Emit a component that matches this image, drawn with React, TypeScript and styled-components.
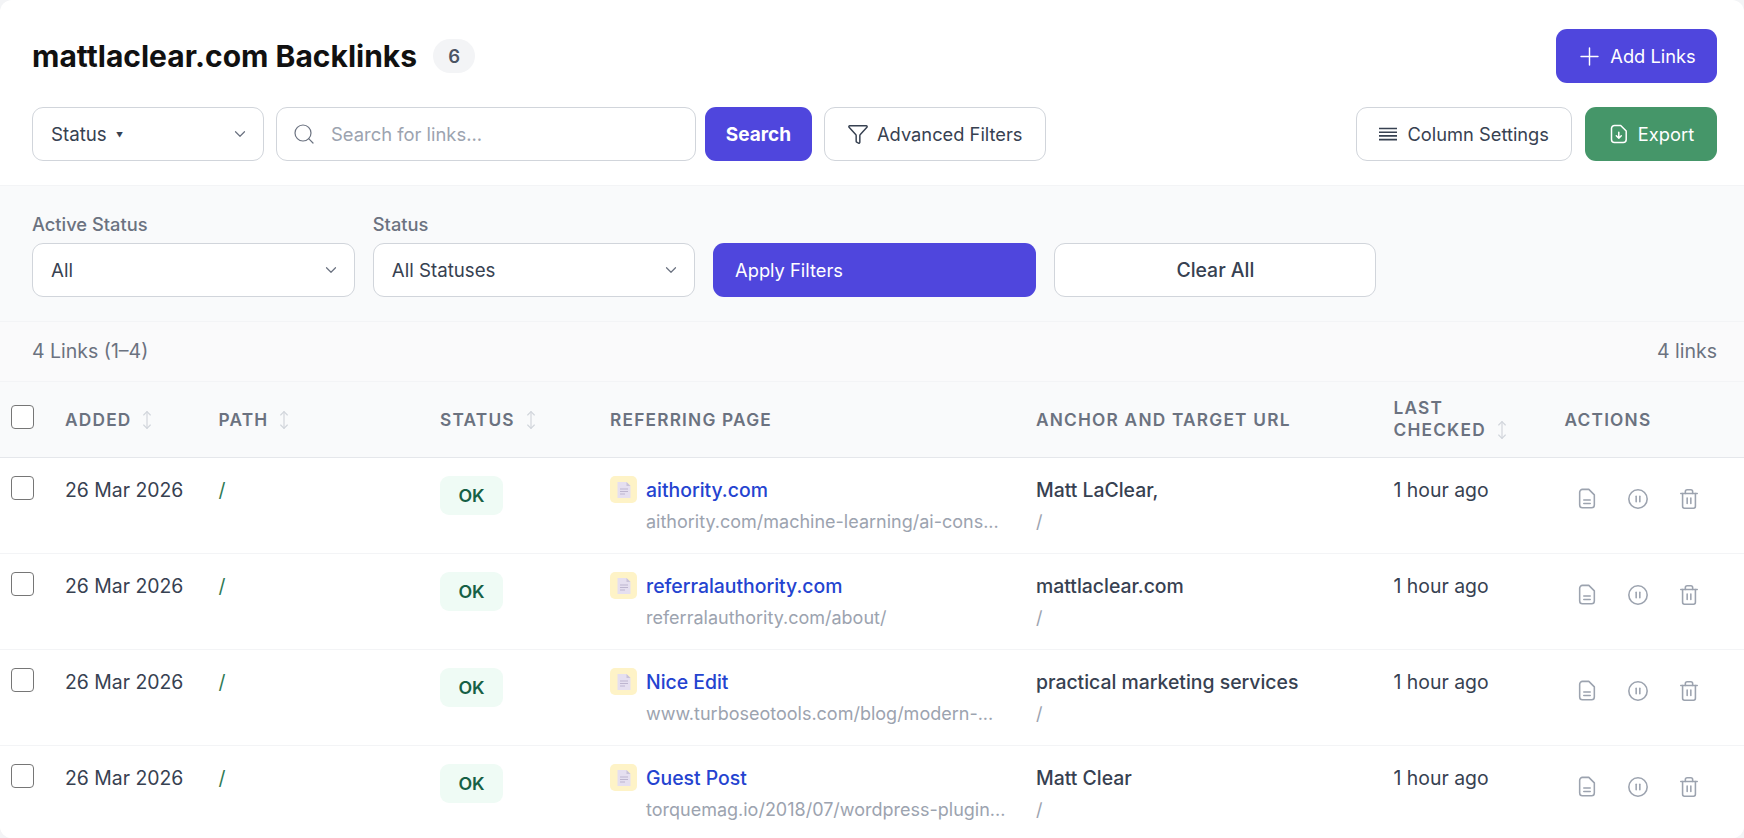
import styled, { createGlobalStyle } from 'styled-components';
import { ChevronDown, CirclePause, Filter, MoveVertical, Plus, Search, Trash2 } from 'lucide-react';

const GlobalStyle = createGlobalStyle`
  html, body {
    margin: 0;
    height: 100%;
    overflow: hidden;
    background: #f3f4f6;
  }
  body {
    font-family: Inter, "Liberation Sans", sans-serif;
    color: #374151;
  }
`;

const COLUMNS = '65px 153.5px 221.5px 170px 426px 357.5px 171px 180px';

const rows = [
  { page: 'aithority.com', url: 'aithority.com/machine-learning/ai-cons...', anchor: 'Matt LaClear,' },
  { page: 'referralauthority.com', url: 'referralauthority.com/about/', anchor: 'mattlaclear.com' },
  { page: 'Nice Edit', url: 'www.turboseotools.com/blog/modern-...', anchor: 'practical marketing services' },
  { page: 'Guest Post', url: 'torquemag.io/2018/07/wordpress-plugin...', anchor: 'Matt Clear' },
];

function ColumnsIcon() {
  return (
    <svg width="18" height="18" viewBox="0 0 18 18" fill="none" stroke="#374151" strokeWidth="1.6">
      <path d="M0 3.5h18M0 7.2h18M0 10.9h18M0 14.6h18" />
    </svg>
  );
}

function ExportIcon() {
  return (
    <svg width="18" height="20" viewBox="0 0 18 20" fill="none" stroke="#fff" strokeWidth="1.5" strokeLinecap="round" strokeLinejoin="round">
      <path d="M4.5 1.5h6.2L16.2 7v8.5a3 3 0 0 1-3 3H4.5a3 3 0 0 1-3-3v-11a3 3 0 0 1 3-3Z" />
      <path d="M8.8 8.2v6M6.3 11.8l2.5 2.5 2.5-2.5" />
    </svg>
  );
}

function PageIcon() {
  return (
    <svg width="14" height="16" viewBox="0 0 14 16">
      <path d="M0.5 0h9L13.5 4v12H0.5Z" fill="#e5dff0" />
      <path d="M9.5 0 13.5 4H9.5Z" fill="#c9c2d8" />
      <path d="M3 7h8M3 9.5h8M3 12h5" stroke="#bdb5cf" strokeWidth="1.2" />
    </svg>
  );
}

function DocActionIcon() {
  return (
    <svg width="22" height="22" viewBox="0 0.5 24 24" fill="none" stroke="currentColor" strokeWidth="1.7" strokeLinecap="round" strokeLinejoin="round">
      <path d="M7 2h7l6 6v11a3 3 0 0 1-3 3H7a3 3 0 0 1-3-3V5a3 3 0 0 1 3-3Z" />
      <path d="M8.5 13.5h7M8.5 17.5h7" />
    </svg>
  );
}

function SortIcon() {
  return <SortMark><MoveVertical size={20} strokeWidth={1.4} /></SortMark>;
}

export default function App() {
  return (
    <Card>
      <GlobalStyle />
      <TopSection>
        <TitleRow>
          <TitleGroup>
            <Title>mattlaclear.com Backlinks</Title>
            <CountBadge>6</CountBadge>
          </TitleGroup>
          <AddButton>
            <Plus size={29} strokeWidth={1.2} />
            Add Links
          </AddButton>
        </TitleRow>
        <Toolbar>
          <SelectBox $width={232}>
            <span>Status <TinyCaret>▼</TinyCaret></span>
            <ChevronDown size={18} strokeWidth={1.6} color="#6b7280" />
          </SelectBox>
          <SearchBox>
            <Search size={24} strokeWidth={1.2} color="#6b7280" />
            <span>Search for links...</span>
          </SearchBox>
          <SearchButton>Search</SearchButton>
          <FilterButton>
            <Filter size={22} strokeWidth={1.6} />
            Advanced Filters
          </FilterButton>
          <ToolbarRight>
            <OutlineButton>
              <ColumnsIcon />
              Column Settings
            </OutlineButton>
            <ExportButton>
              <ExportIcon />
              Export
            </ExportButton>
          </ToolbarRight>
        </Toolbar>
      </TopSection>

      <FilterPanel>
        <FilterField>
          <FilterLabel>Active Status</FilterLabel>
          <SelectBox>
            <span>All</span>
            <ChevronDown size={18} strokeWidth={1.6} color="#6b7280" />
          </SelectBox>
        </FilterField>
        <FilterField>
          <FilterLabel>Status</FilterLabel>
          <SelectBox>
            <span>All Statuses</span>
            <ChevronDown size={18} strokeWidth={1.6} color="#6b7280" />
          </SelectBox>
        </FilterField>
        <ApplyButton>Apply Filters</ApplyButton>
        <ClearButton>Clear All</ClearButton>
      </FilterPanel>

      <SummaryBar>
        <span>4 Links (1–4)</span>
        <span>4 links</span>
      </SummaryBar>

      <HeaderRow>
        <HeaderCheck><Checkbox /></HeaderCheck>
        <HeaderCell>ADDED <SortIcon /></HeaderCell>
        <HeaderCell>PATH <SortIcon /></HeaderCell>
        <HeaderCell>STATUS <SortIcon /></HeaderCell>
        <HeaderCell>REFERRING PAGE</HeaderCell>
        <HeaderCell>ANCHOR AND TARGET URL</HeaderCell>
        <LastCheckedCell>
          <span>LAST<br />CHECKED</span>
          <LastSort><SortIcon /></LastSort>
        </LastCheckedCell>
        <HeaderCell>ACTIONS</HeaderCell>
      </HeaderRow>

      {rows.map((row) => (
        <BodyRow key={row.page}>
          <CheckCell><Checkbox /></CheckCell>
          <DateCell>26 Mar 2026</DateCell>
          <PathCell>/</PathCell>
          <div><OkBadge>OK</OkBadge></div>
          <div>
            <PageLine>
              <PageIconBox><PageIcon /></PageIconBox>
              <PageLink>{row.page}</PageLink>
            </PageLine>
            <PageUrl>{row.url}</PageUrl>
          </div>
          <div>
            <AnchorText>{row.anchor}</AnchorText>
            <TargetUrl>/</TargetUrl>
          </div>
          <DateCell>1 hour ago</DateCell>
          <ActionGroup>
            <DocActionIcon />
            <CirclePause size={22} strokeWidth={1.7} />
            <Trash2 size={22} strokeWidth={1.7} />
          </ActionGroup>
        </BodyRow>
      ))}
    </Card>
  );
}

const Card = styled.div`
  height: 838px;
  overflow: hidden;
  background: #fff;
  border-radius: 12px;
`;

const TopSection = styled.div`
  height: 186px;
  box-sizing: border-box;
  padding: 29px 27px 0 32px;
  border-bottom: 1px solid #f3f4f6;
`;

const TitleRow = styled.div`
  display: flex;
  justify-content: space-between;
  align-items: center;
`;

const TitleGroup = styled.div`
  display: flex;
  align-items: center;
  gap: 16px;
`;

const Title = styled.h1`
  margin: 0;
  font-size: 30px;
  font-weight: 700;
  line-height: 54px;
  color: #111111;
`;

const CountBadge = styled.span`
  display: flex;
  justify-content: center;
  align-items: center;
  width: 42px;
  height: 34px;
  border-radius: 17px;
  background: #f3f4f6;
  color: #4b5563;
  font-size: 18.5px;
  font-weight: 600;
`;

const Button = styled.button`
  display: inline-flex;
  align-items: center;
  justify-content: center;
  gap: 10px;
  height: 54px;
  box-sizing: border-box;
  border-radius: 11px;
  border: 0;
  font-family: inherit;
  font-size: 18.3px;
  font-weight: 400;
  white-space: nowrap;
`;

const PrimaryButton = styled(Button)`
  background: #4f46dd;
  color: #fff;
`;

const AddButton = styled(PrimaryButton)`
  width: 161px;
  gap: 6px;
  padding: 0 2px 0 0;
`;

const Toolbar = styled.div`
  display: flex;
  align-items: center;
  margin-top: 24px;
`;

const SelectBox = styled.div<{ $width?: number }>`
  display: flex;
  align-items: center;
  justify-content: space-between;
  width: ${(p) => (p.$width ? `${p.$width}px` : '100%')};
  height: 54px;
  box-sizing: border-box;
  padding: 0 14px 0 18px;
  background: #fff;
  border: 1px solid #d1d5db;
  border-radius: 11px;
  font-size: 18.7px;
  color: #374151;
`;

const TinyCaret = styled.span`
  font-size: 7px;
  margin-left: 4px;
  vertical-align: 3px;
`;

const SearchBox = styled.div`
  display: flex;
  align-items: center;
  gap: 15px;
  width: 420px;
  height: 54px;
  margin-left: 12px;
  box-sizing: border-box;
  padding: 0 15px;
  border: 1px solid #d1d5db;
  border-radius: 11px;
  font-size: 18.4px;
  color: #9ca3af;
`;

const SearchButton = styled(PrimaryButton)`
  width: 107px;
  margin-left: 9px;
  font-size: 19px;
  font-weight: 700;
`;

const OutlineButton = styled(Button)`
  margin-left: 12px;
  padding: 0 22px;
  background: #fff;
  border: 1px solid #d1d5db;
  color: #374151;
`;

const FilterButton = styled(OutlineButton)`
  gap: 8px;
`;

const ToolbarRight = styled.div`
  display: flex;
  margin-left: auto;
`;

const ExportButton = styled(Button)`
  width: 132px;
  margin-left: 13px;
  padding: 0 0 0 2px;
  background: #459669;
  color: #fff;
`;

const FilterPanel = styled.div`
  display: grid;
  grid-template-columns: 322.5px 322px 323px 322px;
  column-gap: 18.3px;
  align-items: end;
  height: 136px;
  box-sizing: border-box;
  padding: 0 0 24px 32px;
  background: #f9fafb;
  border-bottom: 1px solid #f3f4f6;
`;

const FilterField = styled.div`
  display: flex;
  flex-direction: column;
  gap: 9px;
`;

const FilterLabel = styled.label`
  font-size: 18.3px;
  font-weight: 500;
  line-height: 20px;
  color: #6b7280;
`;

const ApplyButton = styled(PrimaryButton)`
  justify-content: flex-start;
  padding: 0 22px;
`;

const ClearButton = styled(Button)`
  background: #fff;
  border: 1px solid #d1d5db;
  color: #374151;
  font-size: 19.4px;
  font-weight: 500;
`;

const SummaryBar = styled.div`
  display: flex;
  justify-content: space-between;
  align-items: center;
  height: 60px;
  box-sizing: border-box;
  padding: 0 27px 2px 32px;
  background: #fafafb;
  border-bottom: 1px solid #f3f4f6;
  font-size: 19.5px;
  color: #6b7280;
`;

const HeaderRow = styled.div`
  display: grid;
  grid-template-columns: ${COLUMNS};
  align-items: center;
  height: 76px;
  box-sizing: border-box;
  background: #f9fafb;
  border-bottom: 1px solid #e5e7eb;
`;

const HeaderCell = styled.div`
  display: flex;
  align-items: center;
  gap: 6px;
  font-size: 17.3px;
  font-weight: 600;
  line-height: 23px;
  letter-spacing: 1.2px;
  color: #6b7280;
`;

const LastCheckedCell = styled(HeaderCell)`
  line-height: 22px;
  margin-top: -1px;
`;

const SortMark = styled.span`
  display: inline-flex;
  color: #d1d5db;
`;

const LastSort = styled.span`
  display: inline-flex;
  align-self: flex-end;
  margin-bottom: 1px;
`;

const BodyRow = styled.div`
  display: grid;
  grid-template-columns: ${COLUMNS};
  align-items: start;
  height: 96px;
  box-sizing: border-box;
  padding-top: 18px;
  background: #fff;
  border-bottom: 1px solid #f3f4f6;
`;

const CheckCell = styled.div`
  padding-left: 11px;
`;

const HeaderCheck = styled(CheckCell)`
  padding-bottom: 5px;
`;

const Checkbox = styled.span`
  display: block;
  width: 23px;
  height: 24px;
  box-sizing: border-box;
  background: #fff;
  border: 1.5px solid #767676;
  border-radius: 4px;
`;

const DateCell = styled.div`
  font-size: 19.4px;
  line-height: 29px;
  color: #374151;
`;

const PathCell = styled.div`
  font-size: 19.4px;
  line-height: 29px;
  color: #2f7a55;
`;

const OkBadge = styled.span`
  display: inline-flex;
  align-items: center;
  justify-content: center;
  width: 63px;
  height: 39px;
  border-radius: 9px;
  background: #effbf5;
  color: #166045;
  font-size: 17.8px;
  font-weight: 600;
`;

const PageLine = styled.div`
  display: flex;
  align-items: center;
  gap: 9px;
  height: 27px;
`;

const PageIconBox = styled.span`
  display: flex;
  align-items: center;
  justify-content: center;
  width: 27px;
  height: 27px;
  border-radius: 5px;
  background: #fef3c7;
`;

const PageLink = styled.span`
  font-size: 19.4px;
  font-weight: 500;
  color: #2443d0;
`;

const PageUrl = styled.div`
  margin: 7px 0 0 36px;
  font-size: 18px;
  line-height: 24px;
  color: #9ca3af;
  white-space: nowrap;
`;

const AnchorText = styled.div`
  font-size: 19.4px;
  font-weight: 500;
  line-height: 29px;
  color: #374151;
`;

const TargetUrl = styled.div`
  margin-top: 5px;
  font-size: 18px;
  line-height: 24px;
  color: #9ca3af;
`;

const ActionGroup = styled.div`
  display: flex;
  align-items: center;
  gap: 29px;
  height: 27px;
  margin: 9px 0 0 11px;
  color: #9ca3af;
`;
